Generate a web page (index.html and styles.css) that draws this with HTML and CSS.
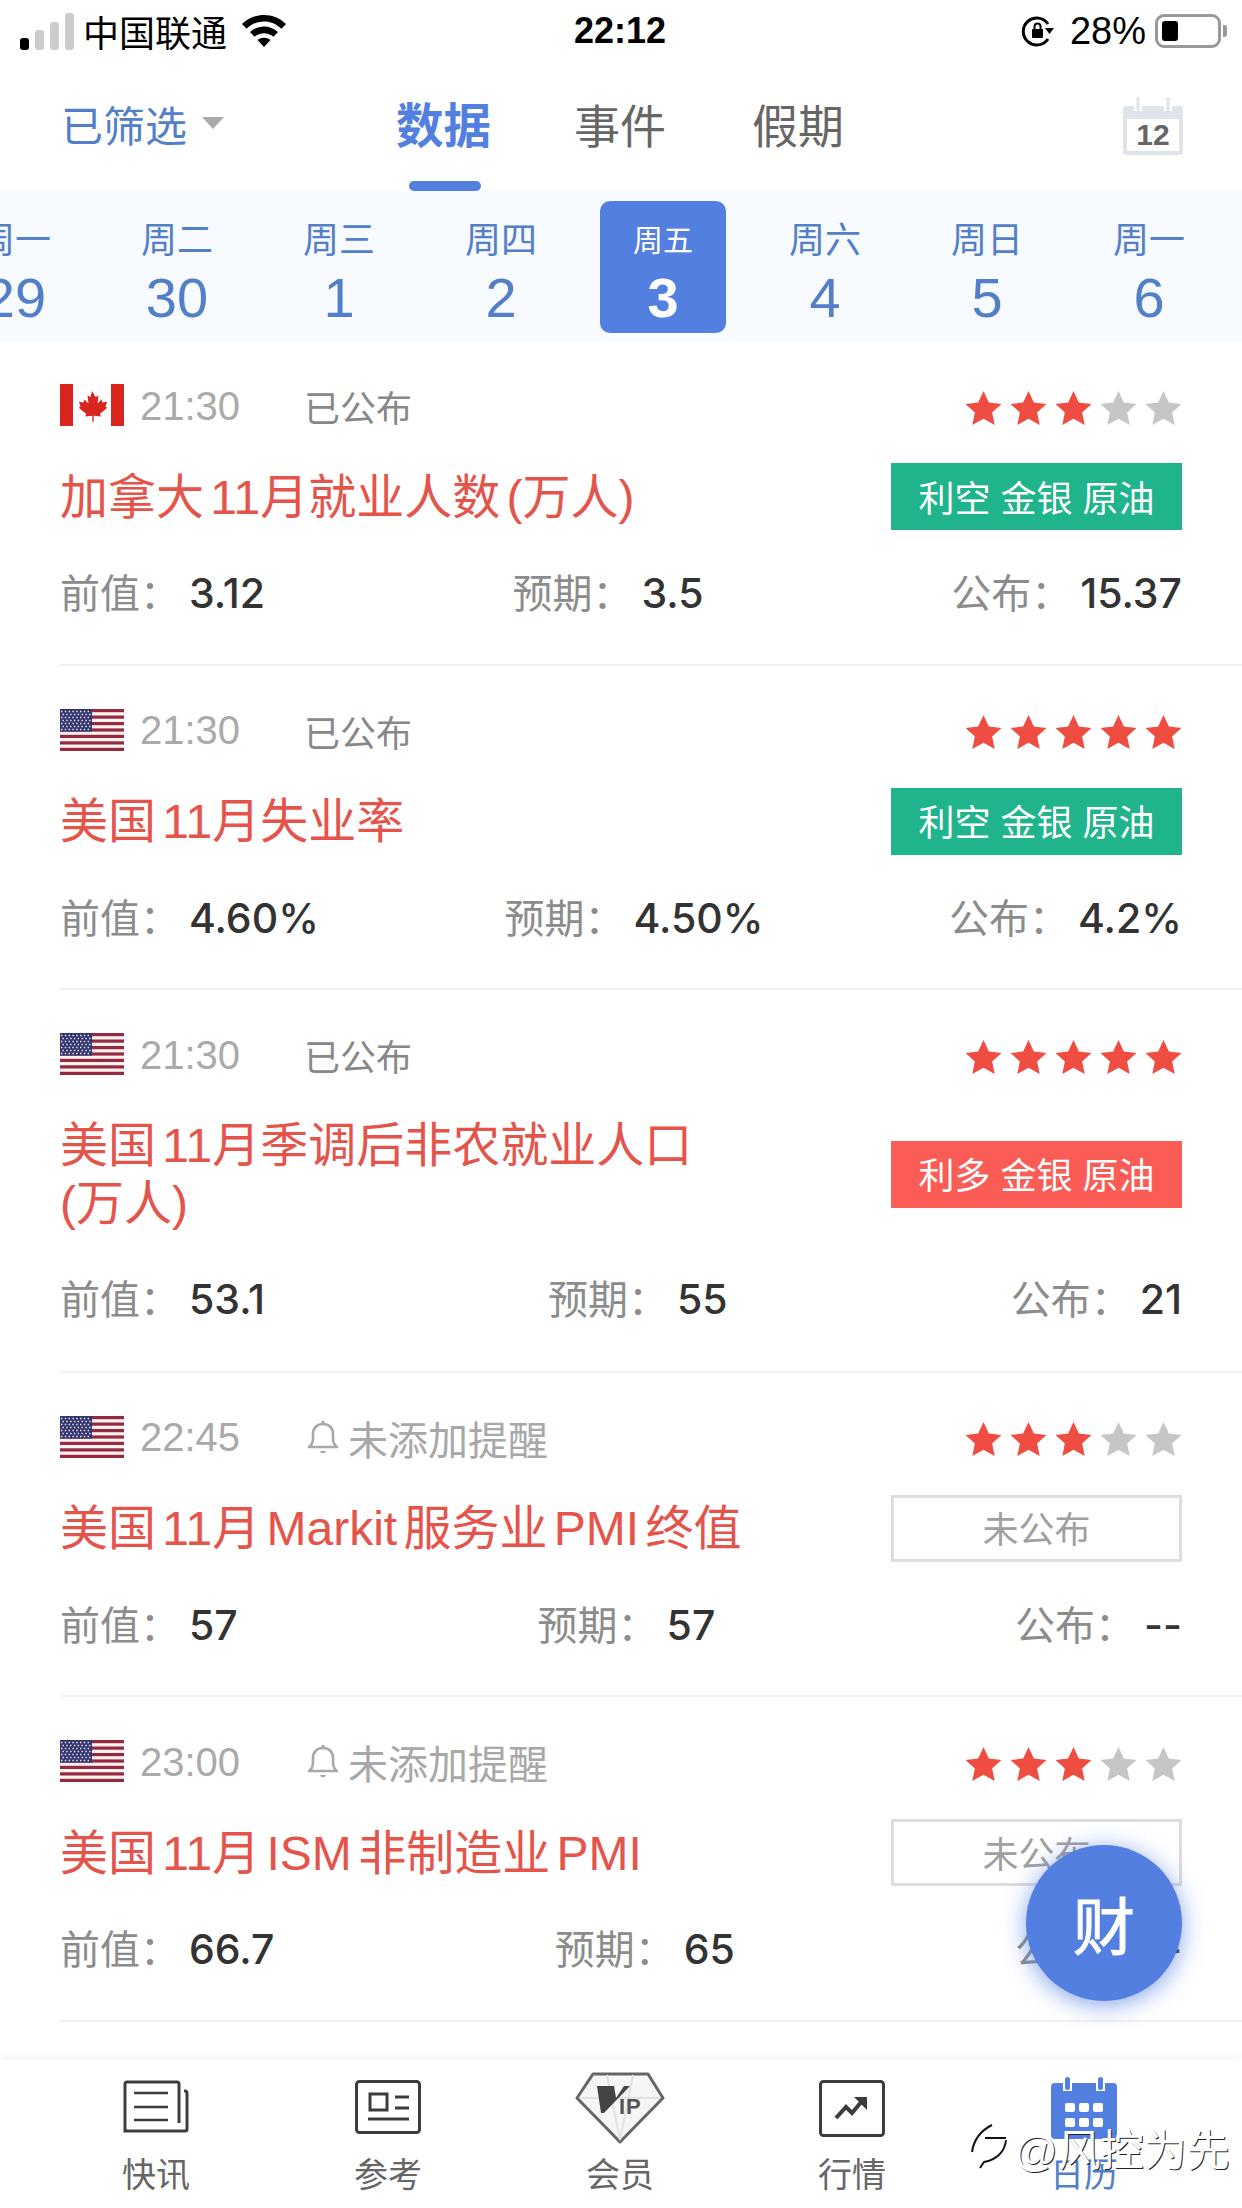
FILE: index.html
```html
<!doctype html>
<html>
<head>
<meta charset="utf-8">
<link rel="stylesheet" href="styles.css">
</head>
<body>
<svg class="defs" width="0" height="0">
  <symbol id="star" viewBox="0 0 36 36"><path d="M18 1l5.200 11.200 12.300 1.400-9.100 8.300 2.500 12.100L18 28l-10.900 6 2.500-12.100-9.100-8.300 12.300-1.400z"/></symbol>
  <symbol id="ca" viewBox="0 0 64 42">
    <rect width="64" height="42" fill="#fff"/>
    <rect width="13" height="42" fill="#d8251d"/><rect x="51" width="13" height="42" fill="#d8251d"/>
    <path fill="#d8251d" d="M32 7l3.500 6 3-1.500-1 8 4-4 1 3 4.500-.8-1.500 5 1.800 1-7.300 6 .7 2.800-7-.8v6h-1.400v-6l-7 .8.7-2.800-7.300-6 1.800-1-1.500-5 4.500.8 1-3 4 4-1-8 3 1.500z"/>
  </symbol>
  <symbol id="us" viewBox="0 0 64 42">
    <rect width="64" height="42" fill="#f7f1f1"/>
    <g fill="#96293d">
      <rect width="64" height="3.200"/><rect y="6.500" width="64" height="3.200"/><rect y="13" width="64" height="3.200"/><rect y="19.400" width="64" height="3.200"/><rect y="25.800" width="64" height="3.200"/><rect y="32.300" width="64" height="3.200"/><rect y="38.800" width="64" height="3.200"/>
    </g>
    <rect width="32" height="22.600" fill="#33356f"/>
    <g fill="none" stroke="#eeeef6" stroke-width="1.400" stroke-dasharray="1.400 2.400">
      <path d="M1 2.500h30M2.500 5.500h28M1 8.500h30M2.500 11.500h28M1 14.500h30M2.500 17.500h28M1 20.500h30"/>
    </g>
  </symbol>
  <symbol id="bell" viewBox="0 0 32 36"><path fill="none" stroke="#a8a8a8" stroke-width="2.600" stroke-linejoin="round" d="M2 27c3-2 4-4 4-9v-4c0-6 4-10 10-10s10 4 10 10v4c0 5 1 7 4 9z"/><path fill="#a8a8a8" d="M13 31h6c0 3-6 3-6 0zM14.500 1h3v3h-3z"/></symbol>
</svg>

<div class="status">
  <div class="status-left">
    <span class="signal"><i class="on"></i><i></i><i></i><i></i></span>
    <span>中国联通</span>
    <svg class="wifi" width="46" height="36" viewBox="0 0 46 36"><path d="M1 11C13-1 33-1 45 11l-4.500 4.800C30.500 6 15.500 6 5.500 15.800z"/><path d="M9 19c8-7.500 20-7.500 28 0l-4.500 4.700c-5.500-4.700-13.500-4.700-19 0z"/><path d="M16.500 27c4-3 9-3 13 0L23 34z"/></svg>
  </div>
  <div class="status-time">22:12</div>
  <div class="status-right">
    <svg class="lock" width="34" height="34" viewBox="0 0 34 34"><path fill="none" stroke="#000" stroke-width="3" d="M27 10A13.500 13.500 0 1 0 27 25"/><path d="M24 14h9l-4.500 6z"/><rect x="11" y="15" width="11" height="9" rx="1"/><path fill="none" stroke="#000" stroke-width="2" d="M13.500 15v-2.500a3 3 0 0 1 6 0V15"/></svg>
    <span>28%</span>
    <span class="battery"><i></i></span>
    <span class="battery-tip"></span>
  </div>
</div>

<header class="top">
  <div class="filter">已筛选<span class="caret"></span></div>
  <nav class="tabs">
    <a class="tab active">数据</a>
    <a class="tab">事件</a>
    <a class="tab">假期</a>
  </nav>
  <svg class="cal" width="60" height="58" viewBox="0 0 60 58">
    <path fill="#dfe3ea" d="M3 9h8v5h8V9h22v5h8V9h8a3 3 0 0 1 3 3v43a3 3 0 0 1-3 3H3a3 3 0 0 1-3-3V12a3 3 0 0 1 3-3z"/>
    <rect x="4" y="22" width="52" height="32" fill="#fff"/>
    <rect x="13.500" y="0" width="3" height="14" rx="1.500" fill="#dfe3ea"/><rect x="43.500" y="0" width="3" height="14" rx="1.500" fill="#dfe3ea"/>
    <text class="cal-num" x="30" y="48" text-anchor="middle">12</text>
  </svg>
</header>

<div class="dates">
  <div class="day"><span class="day-name">周一</span><span class="day-num">29</span></div>
  <div class="day"><span class="day-name">周二</span><span class="day-num">30</span></div>
  <div class="day"><span class="day-name">周三</span><span class="day-num">1</span></div>
  <div class="day"><span class="day-name">周四</span><span class="day-num">2</span></div>
  <div class="day selected"><span class="day-name">周五</span><span class="day-num">3</span></div>
  <div class="day"><span class="day-name">周六</span><span class="day-num">4</span></div>
  <div class="day"><span class="day-name">周日</span><span class="day-num">5</span></div>
  <div class="day"><span class="day-name">周一</span><span class="day-num">6</span></div>
</div>

<main class="list">
  <section class="item">
    <div class="item-head">
      <svg class="flag"><use href="#ca"/></svg>
      <span class="time">21:30</span><span class="state">已公布</span>
      <span class="stars"><svg class="on"><use href="#star"/></svg><svg class="on"><use href="#star"/></svg><svg class="on"><use href="#star"/></svg><svg><use href="#star"/></svg><svg><use href="#star"/></svg></span>
    </div>
    <div class="item-body">
      <h2 class="title">加拿大 11月就业人数 (万人)</h2>
      <span class="tag bear">利空 金银 原油</span>
    </div>
    <div class="vals">
      <span class="val"><label>前值：</label><b>3.12</b></span>
      <span class="val"><label>预期：</label><b>3.5</b></span>
      <span class="val"><label>公布：</label><b>15.37</b></span>
    </div>
  </section>

  <section class="item">
    <div class="item-head">
      <svg class="flag"><use href="#us"/></svg>
      <span class="time">21:30</span><span class="state">已公布</span>
      <span class="stars"><svg class="on"><use href="#star"/></svg><svg class="on"><use href="#star"/></svg><svg class="on"><use href="#star"/></svg><svg class="on"><use href="#star"/></svg><svg class="on"><use href="#star"/></svg></span>
    </div>
    <div class="item-body">
      <h2 class="title">美国 11月失业率</h2>
      <span class="tag bear">利空 金银 原油</span>
    </div>
    <div class="vals">
      <span class="val"><label>前值：</label><b>4.60%</b></span>
      <span class="val"><label>预期：</label><b>4.50%</b></span>
      <span class="val"><label>公布：</label><b>4.2%</b></span>
    </div>
  </section>

  <section class="item tall">
    <div class="item-head">
      <svg class="flag"><use href="#us"/></svg>
      <span class="time">21:30</span><span class="state">已公布</span>
      <span class="stars"><svg class="on"><use href="#star"/></svg><svg class="on"><use href="#star"/></svg><svg class="on"><use href="#star"/></svg><svg class="on"><use href="#star"/></svg><svg class="on"><use href="#star"/></svg></span>
    </div>
    <div class="item-body">
      <h2 class="title">美国 11月季调后非农就业人口<br>(万人)</h2>
      <span class="tag bull">利多 金银 原油</span>
    </div>
    <div class="vals">
      <span class="val"><label>前值：</label><b>53.1</b></span>
      <span class="val"><label>预期：</label><b>55</b></span>
      <span class="val"><label>公布：</label><b>21</b></span>
    </div>
  </section>

  <section class="item">
    <div class="item-head">
      <svg class="flag"><use href="#us"/></svg>
      <span class="time">22:45</span><span class="state remind"><svg class="bell"><use href="#bell"/></svg>未添加提醒</span>
      <span class="stars"><svg class="on"><use href="#star"/></svg><svg class="on"><use href="#star"/></svg><svg class="on"><use href="#star"/></svg><svg><use href="#star"/></svg><svg><use href="#star"/></svg></span>
    </div>
    <div class="item-body">
      <h2 class="title">美国 11月 Markit 服务业 PMI 终值</h2>
      <span class="tag none">未公布</span>
    </div>
    <div class="vals">
      <span class="val"><label>前值：</label><b>57</b></span>
      <span class="val"><label>预期：</label><b>57</b></span>
      <span class="val"><label>公布：</label><b>--</b></span>
    </div>
  </section>

  <section class="item">
    <div class="item-head">
      <svg class="flag"><use href="#us"/></svg>
      <span class="time">23:00</span><span class="state remind"><svg class="bell"><use href="#bell"/></svg>未添加提醒</span>
      <span class="stars"><svg class="on"><use href="#star"/></svg><svg class="on"><use href="#star"/></svg><svg class="on"><use href="#star"/></svg><svg><use href="#star"/></svg><svg><use href="#star"/></svg></span>
    </div>
    <div class="item-body">
      <h2 class="title">美国 11月 ISM 非制造业 PMI</h2>
      <span class="tag none">未公布</span>
    </div>
    <div class="vals">
      <span class="val"><label>前值：</label><b>66.7</b></span>
      <span class="val"><label>预期：</label><b>65</b></span>
      <span class="val"><label>公布：</label><b>--</b></span>
    </div>
  </section>
</main>

<div class="fab">财</div>

<footer class="tabbar">
  <div class="bar-item">
    <div class="bar-icon">
      <svg width="66" height="54" viewBox="0 0 66 54" fill="none" stroke="#3c3c3c" stroke-width="3"><path d="M56 43V4a2 2 0 0 0-2-2H4a2 2 0 0 0-2 2v47h60a2 2 0 0 0 2-2V13a2 2 0 0 0-2-2h-1"/><path stroke-width="2.500" d="M11 13h34M11 27h34M11 40h34"/></svg>
    </div>
    <span>快讯</span>
  </div>
  <div class="bar-item">
    <div class="bar-icon">
      <svg width="66" height="54" viewBox="0 0 66 54" fill="none" stroke="#3c3c3c" stroke-width="3"><rect x="1.500" y="1.500" width="63" height="51" rx="3"/><rect x="15" y="14" width="17" height="16"/><path d="M40 17h14M40 28h14M13 39h41"/></svg>
    </div>
    <span>参考</span>
  </div>
  <div class="bar-item">
    <div class="bar-icon vip">
      <svg width="90" height="72" viewBox="0 0 90 72"><path fill="#f6f6f6" stroke="#666" stroke-width="3" stroke-linejoin="round" d="M18 2h55l15 24-43 44L2 26z"/><path fill="none" stroke="#e2e2e2" stroke-width="2" d="M5 26h80M32 3l13 65 13-65"/><path fill="#444" d="M22 14h17l2 12 8-12h6L29 41h-3z"/><text class="vip-txt" x="44" y="42">IP</text></svg>
    </div>
    <span>会员</span>
  </div>
  <div class="bar-item">
    <div class="bar-icon">
      <svg width="66" height="57" viewBox="0 0 66 57" fill="none" stroke="#3c3c3c" stroke-width="3"><rect x="1.500" y="1.500" width="63" height="54" rx="3"/><path stroke-width="4" d="M17 38l10-11 6 6 10-12"/><path fill="#3c3c3c" stroke="none" d="M35 17h13v13z"/></svg>
    </div>
    <span>行情</span>
  </div>
  <div class="bar-item active">
    <div class="bar-icon cal-on">
      <svg width="66" height="62" viewBox="0 0 66 62"><path fill="#527fe0" d="M4 6h8v8h9V6h24v8h9V6h8a4 4 0 0 1 4 4v48a4 4 0 0 1-4 4H4a4 4 0 0 1-4-4V10a4 4 0 0 1 4-4z"/><rect x="14" y="0" width="5" height="13" rx="2.500" fill="#527fe0"/><rect x="47" y="0" width="5" height="13" rx="2.500" fill="#527fe0"/><g fill="#fff"><rect x="14" y="26" width="10" height="9" rx="2"/><rect x="28" y="26" width="10" height="9" rx="2"/><rect x="42" y="26" width="10" height="9" rx="2"/><rect x="14" y="41" width="10" height="9" rx="2"/><rect x="28" y="41" width="10" height="9" rx="2"/><rect x="42" y="41" width="10" height="9" rx="2"/></g></svg>
    </div>
    <span>日历</span>
  </div>
</footer>

<div class="watermark">
  <svg width="38" height="46" viewBox="0 0 38 46" fill="none" stroke="#111" stroke-width="2"><path d="M22 1C12 6 4 14 2 28M15 14h21M36 16C35 28 26 36 14 38l-4 6"/></svg>
  <span>@风控为先</span>
</div>
</body>
</html>
```

FILE: styles.css
```css
* { box-sizing: border-box; }

html, body { margin: 0; padding: 0; }

body {
  width: 1242px;
  height: 2208px;
  overflow: hidden;
  position: relative;
  background: #fff;
  font-family: "Liberation Sans", "Noto Sans CJK SC", sans-serif;
  color: #333;
}

.defs { position: absolute; }

/* status bar */
.status {
  height: 62px;
  padding: 0 15px 0 13px;
  display: grid;
  grid-template-columns: 1fr auto 1fr;
  align-items: center;
  font-size: 36px;
  color: #000;
}
.status-left, .status-right { display: flex; align-items: center; }
.status-right { justify-content: flex-end; font-size: 38px; }
.status-time { font-weight: bold; font-size: 36px; }
.signal { display: flex; align-items: flex-end; gap: 6px; height: 38px; margin: 0 9px 0 7px; }
.signal i { width: 9px; background: #ccc; border-radius: 3px; }
.signal i.on { background: #000; }
.signal i:nth-child(1) { height: 12px; }
.signal i:nth-child(2) { height: 20px; }
.signal i:nth-child(3) { height: 28px; }
.signal i:nth-child(4) { height: 37px; }
.wifi { margin-left: 14px; }
.lock { margin-right: 15px; }
.battery {
  width: 66px;
  height: 34px;
  margin-left: 9px;
  padding: 4px;
  border: 3px solid #999;
  border-radius: 9px;
}
.battery i { display: block; width: 16px; height: 100%; background: #000; border-radius: 3px; }
.battery-tip { width: 4px; height: 12px; margin-left: 2px; background: #999; border-radius: 0 3px 3px 0; }

/* top tabs */
.top { height: 129px; position: relative; display: flex; }
.filter {
  width: 340px;
  padding: 32px 0 0 61px;
  height: 90px;
  display: flex;
  align-items: center;
  font-size: 42px;
  color: #527fc8;
}
.caret {
  margin-left: 15px;
  border: 11px solid transparent;
  border-top: 12px solid #aaa;
  border-bottom: 0;
}
.tabs { display: flex; gap: 86px; margin-left: 56px; }
.tab {
  height: 129px;
  padding-top: 35px;
  font-size: 46px;
  line-height: 60px;
  color: #666;
  position: relative;
}
.tab.active { color: #527fe0; font-weight: bold; font-size: 47.500px; margin-right: -3px; }
.tab.active::after {
  content: "";
  position: absolute;
  left: 13px;
  right: 10px;
  bottom: 0;
  height: 10px;
  background: #527fe0;
  border-radius: 5px;
}
.cal { position: absolute; right: 59px; top: 35px; }
.cal-num { font: bold 30px "Liberation Sans", sans-serif; fill: #666; }

/* date strip */
.dates {
  height: 150px;
  background: #f7fafe;
  padding-top: 10px;
  overflow: hidden;
  display: flex;
}
.day {
  flex: none;
  width: 162px;
  height: 132px;
  display: flex;
  flex-direction: column;
  align-items: center;
  color: #527fc8;
}
.day:first-child { margin-left: -66px; }
.day-name { font-size: 36px; line-height: 40px; margin-top: 20px; }
.day-num { font-size: 56px; line-height: 66px; margin-top: 4px; }
.day.selected { margin: 0 18px; width: 126px; background: #527fe0; color: #fff; border-radius: 10px; }
.day.selected .day-name { font-size: 30px; }
.day.selected .day-num { font-weight: bold; }

/* list */
.item { margin-left: 60px; padding: 43px 60px 0 0; height: 324.500px; border-bottom: 2px solid #f2f2f2; }
.item.tall { height: 382.500px; }
.item-head { height: 44px; display: flex; align-items: center; }
.flag { width: 64px; height: 42px; margin-top: -2px; }
.time { margin-left: 16px; width: 166px; font-size: 40px; color: #aaa; }
.state { font-size: 36px; color: #888; display: flex; align-items: center; margin-left: -2px; }
.state.remind { color: #a8a8a8; font-size: 40px; }
.bell { width: 32px; height: 36px; margin: 0 9px 0 3px; }
.stars { margin: 4px 0 0 auto; display: flex; gap: 8px; }
.stars svg { width: 37px; height: 37px; fill: #c6c6c6; }
.stars svg.on { fill: #ef4d42; }
.item-body { margin-top: 36px; min-height: 67px; display: flex; align-items: center; justify-content: space-between; }
.title { margin: 0; padding: 4px 0; width: 770px; font-size: 48px; line-height: 58px; font-weight: normal; color: #e5544b; word-spacing: -7px; }
.tag { flex: none; width: 291px; height: 67px; margin-top: -2px; padding-bottom: 2px; display: flex; align-items: center; justify-content: center; font-size: 36px; color: #fff; }
.tag.bear { background: #20b48c; }
.tag.bull { background: #fb5c55; }
.tag.none { border: 3px solid #ddd; color: #a0a0a0; }
.vals { margin-top: 39px; display: flex; justify-content: space-between; font-size: 40px; line-height: 46px; }
.val label { color: #8c8c8c; }
.val b { margin-left: 9px; font-family: Inter, "Liberation Sans", sans-serif; font-size: 41px; font-weight: 500; color: #333; }

/* floating button */
.fab {
  position: absolute;
  left: 1026px;
  top: 1845px;
  width: 156px;
  height: 156px;
  border-radius: 50%;
  background: #527fe0;
  box-shadow: 0 4px 24px rgba(82, 127, 224, .7);
  color: #fff;
  font-size: 62px;
  -webkit-text-stroke: 1px #fff;
  display: flex;
  align-items: center;
  justify-content: center;
}

/* bottom tabs */
.tabbar {
  position: absolute;
  left: 0;
  right: 0;
  bottom: 0;
  height: 148px;
  padding: 20px 42px 0 40px;
  background: #fff;
  box-shadow: 0 -4px 8px rgba(0, 0, 0, .04);
  display: grid;
  grid-template-columns: repeat(5, 1fr);
}
.bar-item { display: flex; flex-direction: column; align-items: center; font-size: 34px; line-height: 44px; color: #666; }
.bar-icon { height: 73px; }
.bar-icon svg { display: block; }
.bar-icon.vip { margin-top: -8px; height: 81px; }
.bar-icon.cal-on { margin-top: -3px; height: 76px; }
.bar-item.active span { color: #527fc8; }
.vip-txt { font: bold 22px "Liberation Sans", sans-serif; fill: #555; letter-spacing: 1px; }

/* watermark */
.watermark {
  position: absolute;
  left: 970px;
  top: 2116px;
  display: flex;
  align-items: center;
  gap: 6px;
  white-space: nowrap;
  font-size: 43px;
  color: #fff;
  text-shadow: 1px 1px 0 #222;
}
```
